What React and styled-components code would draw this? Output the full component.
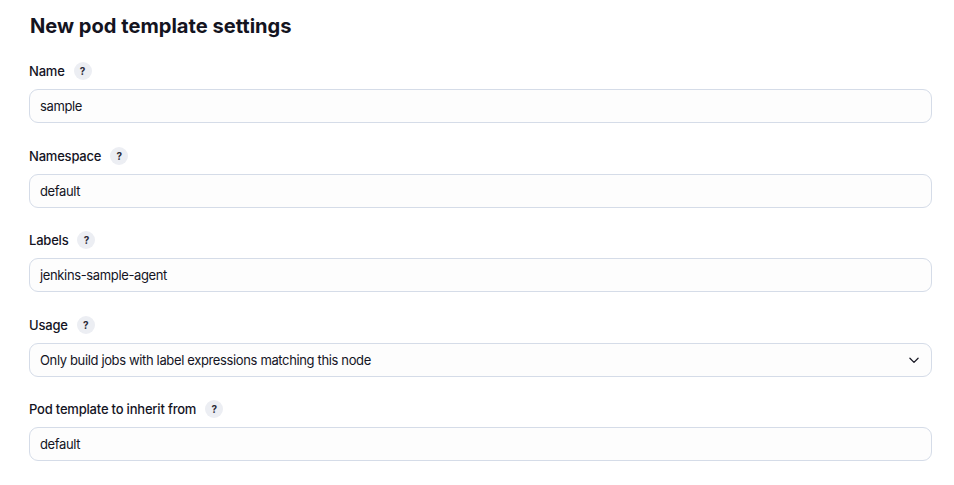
import React from "react";
import styled, { createGlobalStyle } from "styled-components";

const GlobalStyle = createGlobalStyle`
  body {
    margin: 0;
    background: #ffffff;
    font-family: Inter, "Noto Sans", "Liberation Sans", sans-serif;
    color: #14141f;
  }
`;

const Page = styled.div`
  padding: 12px 22px 20px 29px;
`;

const Title = styled.h1`
  margin: 0 0 21px 1px;
  font-size: 20.1px;
  font-weight: 700;
  line-height: 28px;
  color: #14141f;
`;

const Field = styled.div`
  display: flex;
  flex-direction: column;
  margin-bottom: 22.5px;
`;

const LabelRow = styled.div`
  display: flex;
  align-items: center;
  gap: 9px;
  height: 20px;
  margin-bottom: 8px;
  font-size: 13px;
  font-weight: 450;
  letter-spacing: -0.2px;
  color: #14141f;
`;

const Help = styled.span`
  display: inline-flex;
  align-items: center;
  justify-content: center;
  width: 18px;
  height: 18px;
  border-radius: 50%;
  background: #eceef3;
  font-size: 10px;
  font-weight: 700;
  letter-spacing: 0;
  color: #2a2a38;
`;

const Input = styled.div`
  position: relative;
  display: flex;
  align-items: center;
  box-sizing: border-box;
  height: 34px;
  padding: 0 10px;
  border: 1px solid #d5dce8;
  border-radius: 9px;
  background: #fdfdfd;
  font-size: 13px;
  letter-spacing: -0.36px;
  color: #14141f;
`;

const Chevron = styled.svg`
  position: absolute;
  right: 10px;
  top: 50%;
  transform: translateY(-50%);
`;

const fields = [
  { label: "Name", value: "sample" },
  { label: "Namespace", value: "default" },
  { label: "Labels", value: "jenkins-sample-agent" },
  { label: "Usage", value: "Only build jobs with label expressions matching this node", select: true },
  { label: "Pod template to inherit from", value: "default" },
];

export default function App() {
  return (
    <>
      <GlobalStyle />
      <Page>
        <Title>New pod template settings</Title>
        {fields.map((f) => (
          <Field key={f.label}>
            <LabelRow>
              {f.label}
              <Help>?</Help>
            </LabelRow>
            <Input>
              {f.value}
              {f.select && (
                <Chevron width="14" height="14" viewBox="0 0 24 24" fill="none" stroke="#1a1a26" strokeWidth="2.2" strokeLinecap="round" strokeLinejoin="round">
                  <path d="M5 9l7 7 7-7" />
                </Chevron>
              )}
            </Input>
          </Field>
        ))}
      </Page>
    </>
  );
}
